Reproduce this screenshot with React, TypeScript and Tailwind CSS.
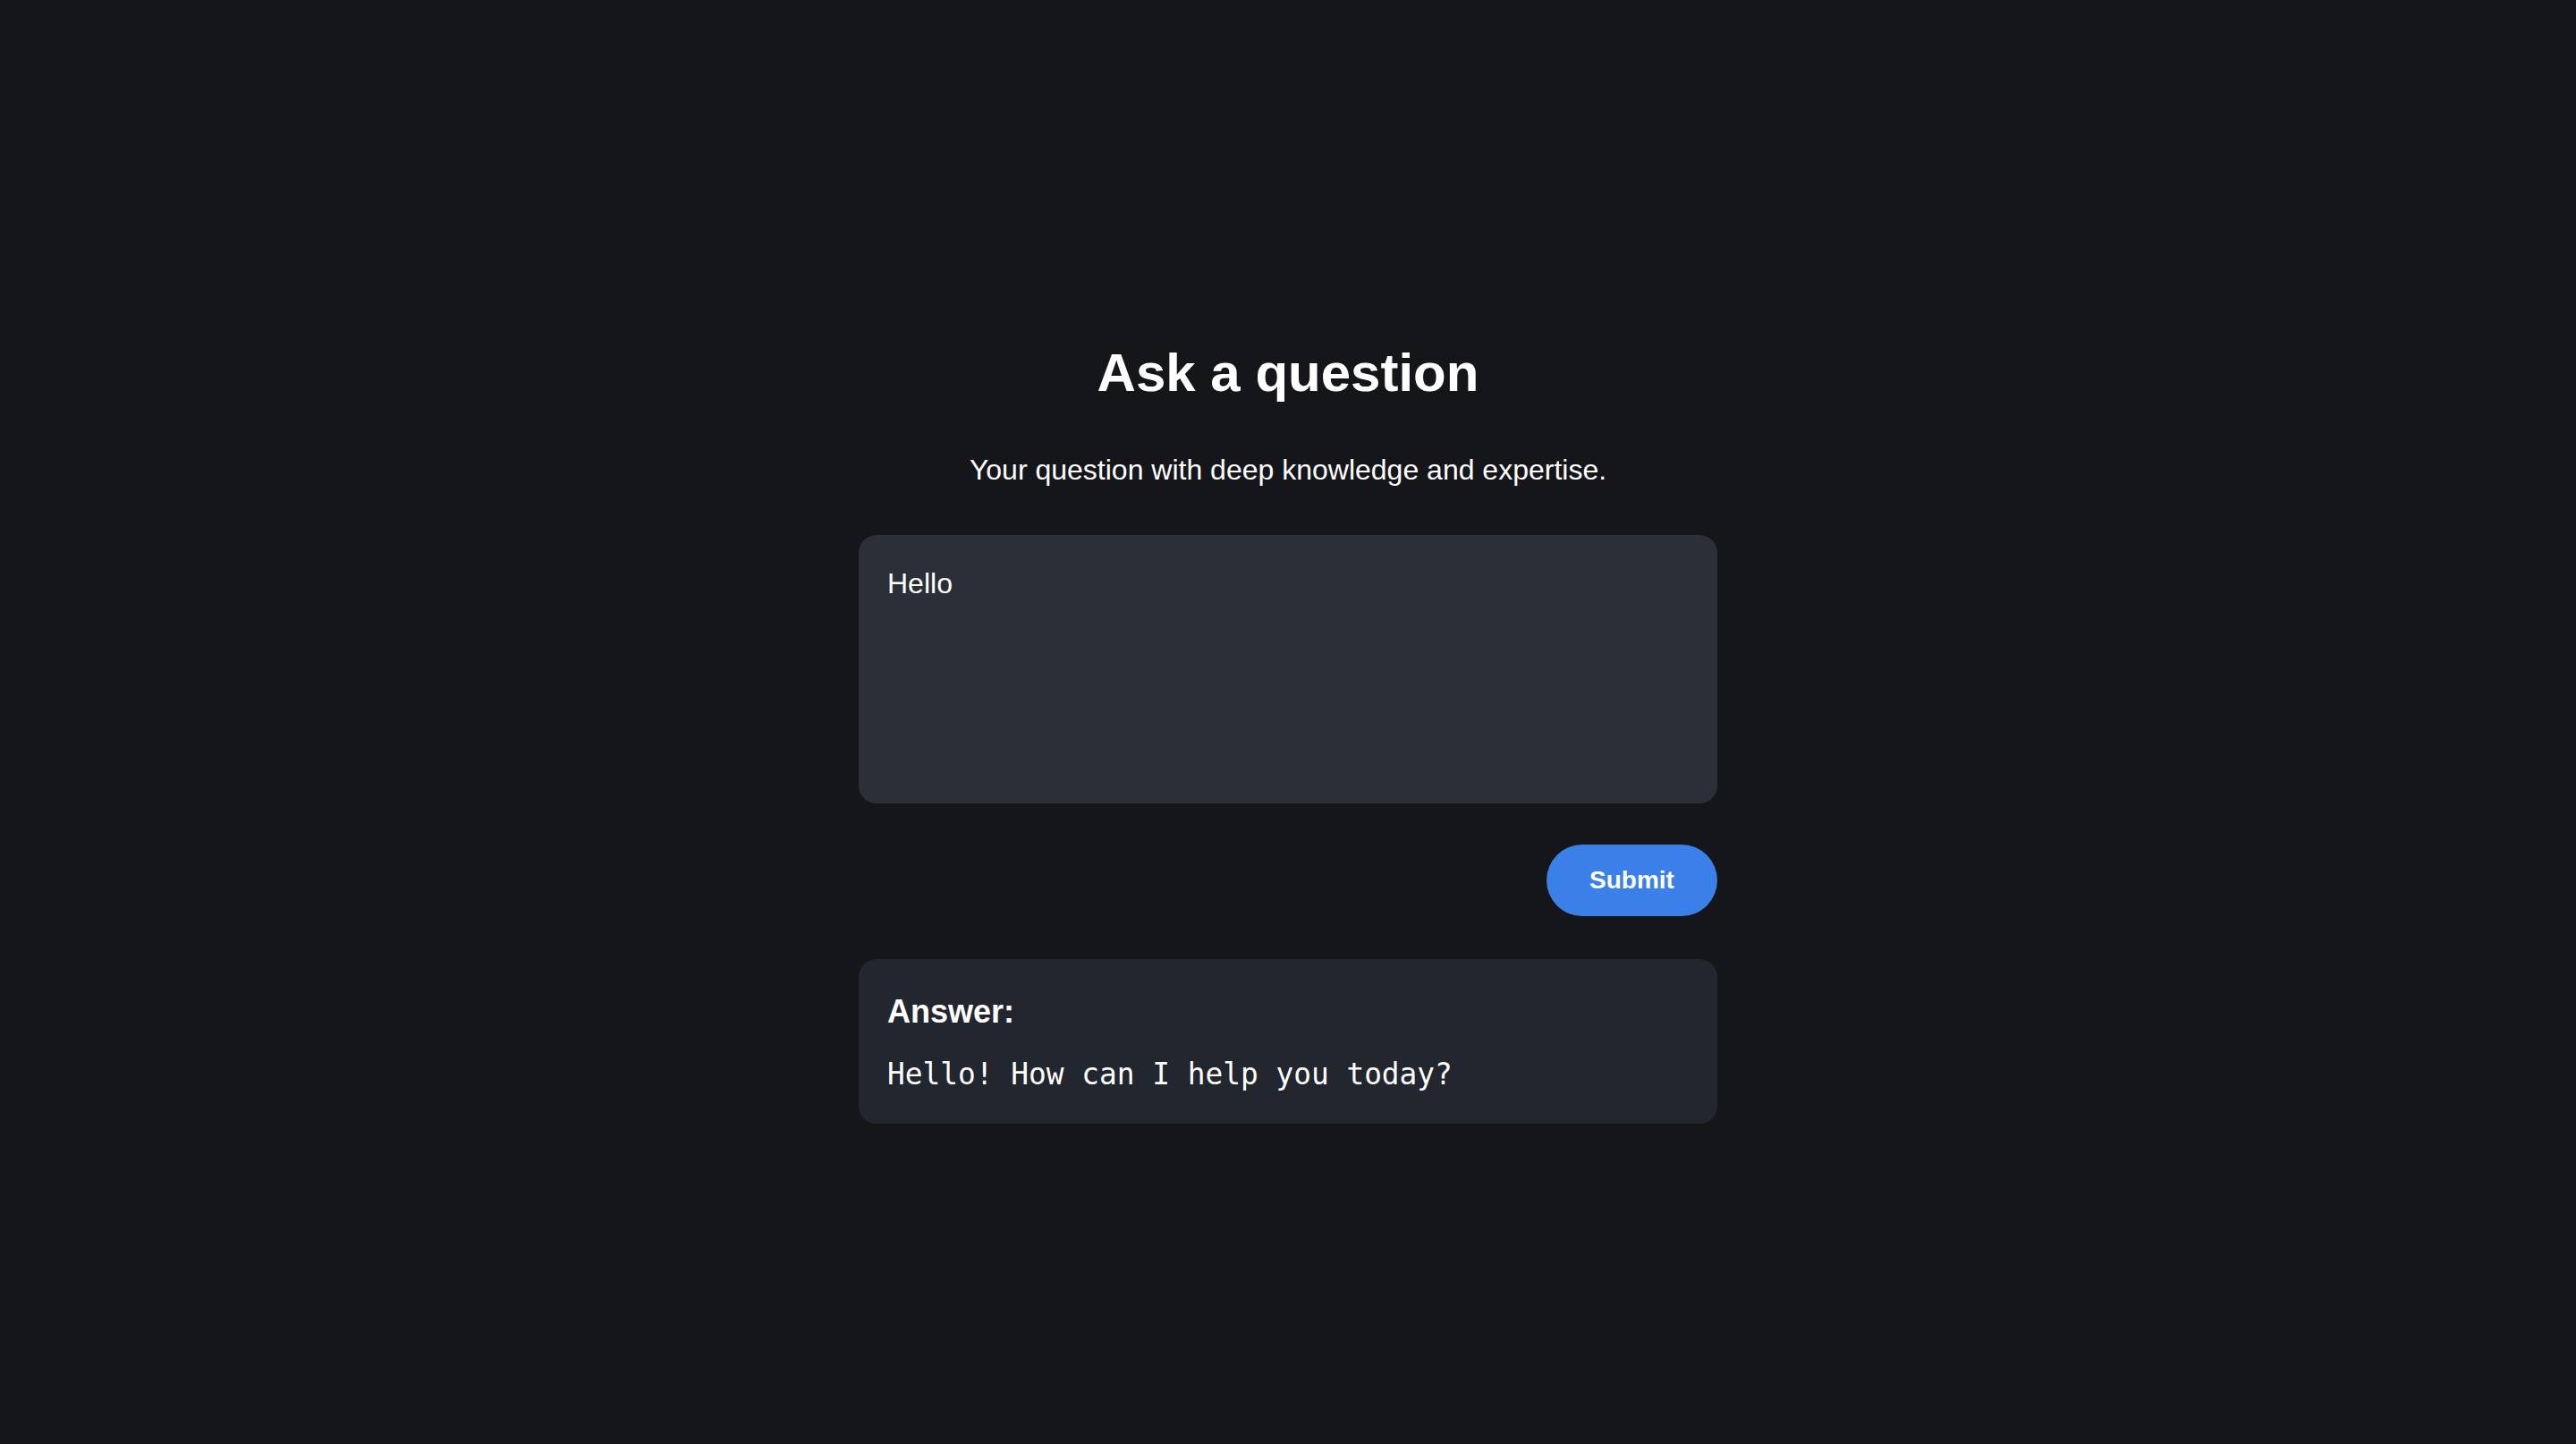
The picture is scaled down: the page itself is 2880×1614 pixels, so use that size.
import React, { useState } from 'react';

const App: React.FC = () => {
    const [question, setQuestion] = useState('Hello');

    return (
        <div className="min-h-screen w-full bg-[#14161a] text-white font-['Liberation_Sans',Arial,sans-serif]">
            <div className="mx-auto w-[960px] pt-[372px] flex flex-col">
                <h1 className="text-center text-[60px] font-bold leading-[90px]">Ask a question</h1>
                <p className="mt-[39px] text-center text-[32px] leading-[48px]">
                    Your question with deep knowledge and expertise.
                </p>

                <textarea
                    value={question}
                    onChange={(e) => setQuestion(e.target.value)}
                    className="mt-[49px] block h-[300px] w-full resize-none rounded-[20px] bg-[#2a2f38] px-8 pt-[30px] pb-8 text-[32px] leading-[48px] text-white outline-none"
                />

                <div className="mt-[46px] flex justify-end">
                    <button
                        type="button"
                        className="h-[80px] w-[191px] rounded-full bg-[#3a80e8] text-[28px] font-bold text-white"
                    >
                        Submit
                    </button>
                </div>

                <div className="mt-[48px] rounded-[20px] bg-[#22262e] px-8 pt-8 pb-[29px]">
                    <h3 className="text-[36px] font-bold leading-[54px]">Answer:</h3>
                    <pre className="mt-[19px] font-['DejaVu_Sans_Mono',Menlo,monospace] text-[32.8px] leading-[49.5px] whitespace-pre-wrap">
                        Hello! How can I help you today?
                    </pre>
                </div>
            </div>
        </div>
    );
};

export default App;
